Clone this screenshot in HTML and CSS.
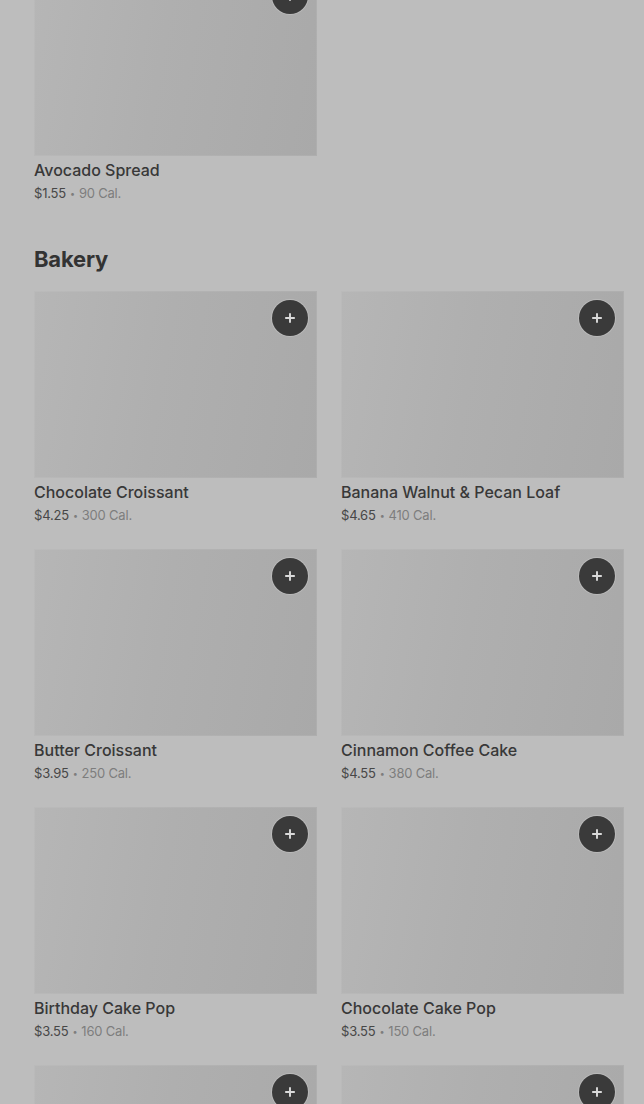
FILE: index.html
```html
<!DOCTYPE html>
<html lang="en">
<head>
    <meta charset="UTF-8">
    <meta name="viewport" content="width=device-width, initial-scale=1.0">
    <title>Menu</title>
    <link rel="stylesheet" href="styles.css">
</head>
<body>
    <main class="menu">
        <!-- Spreads (scrolled past) -->
        <section class="section section-top">
            <div class="grid">
                <div class="item">
                    <div class="thumb"><button class="add" type="button" aria-label="Add"><svg viewBox="0 0 16 16"><path d="M8 2.5v11M2.5 8h11"/></svg></button></div>
                    <div class="name">Avocado Spread</div>
                    <div class="meta"><span class="price">$1.55</span><span class="dot">•</span>90 Cal.</div>
                </div>
            </div>
        </section>

        <!-- Bakery -->
        <section class="section">
            <h2>Bakery</h2>
            <div class="grid">
                <div class="item">
                    <div class="thumb"><button class="add" type="button" aria-label="Add"><svg viewBox="0 0 16 16"><path d="M8 2.5v11M2.5 8h11"/></svg></button></div>
                    <div class="name">Chocolate Croissant</div>
                    <div class="meta"><span class="price">$4.25</span><span class="dot">•</span>300 Cal.</div>
                </div>
                <div class="item">
                    <div class="thumb"><button class="add" type="button" aria-label="Add"><svg viewBox="0 0 16 16"><path d="M8 2.5v11M2.5 8h11"/></svg></button></div>
                    <div class="name">Banana Walnut &amp; Pecan Loaf</div>
                    <div class="meta"><span class="price">$4.65</span><span class="dot">•</span>410 Cal.</div>
                </div>
                <div class="item">
                    <div class="thumb"><button class="add" type="button" aria-label="Add"><svg viewBox="0 0 16 16"><path d="M8 2.5v11M2.5 8h11"/></svg></button></div>
                    <div class="name">Butter Croissant</div>
                    <div class="meta"><span class="price">$3.95</span><span class="dot">•</span>250 Cal.</div>
                </div>
                <div class="item">
                    <div class="thumb"><button class="add" type="button" aria-label="Add"><svg viewBox="0 0 16 16"><path d="M8 2.5v11M2.5 8h11"/></svg></button></div>
                    <div class="name">Cinnamon Coffee Cake</div>
                    <div class="meta"><span class="price">$4.55</span><span class="dot">•</span>380 Cal.</div>
                </div>
                <div class="item">
                    <div class="thumb"><button class="add" type="button" aria-label="Add"><svg viewBox="0 0 16 16"><path d="M8 2.5v11M2.5 8h11"/></svg></button></div>
                    <div class="name">Birthday Cake Pop</div>
                    <div class="meta"><span class="price">$3.55</span><span class="dot">•</span>160 Cal.</div>
                </div>
                <div class="item">
                    <div class="thumb"><button class="add" type="button" aria-label="Add"><svg viewBox="0 0 16 16"><path d="M8 2.5v11M2.5 8h11"/></svg></button></div>
                    <div class="name">Chocolate Cake Pop</div>
                    <div class="meta"><span class="price">$3.55</span><span class="dot">•</span>150 Cal.</div>
                </div>
                <!-- next row, only the picture tops are in view -->
                <div class="item">
                    <div class="thumb"><button class="add" type="button" aria-label="Add"><svg viewBox="0 0 16 16"><path d="M8 2.5v11M2.5 8h11"/></svg></button></div>
                </div>
                <div class="item">
                    <div class="thumb"><button class="add" type="button" aria-label="Add"><svg viewBox="0 0 16 16"><path d="M8 2.5v11M2.5 8h11"/></svg></button></div>
                </div>
            </div>
        </section>
    </main>
</body>
</html>
```

FILE: styles.css
```css
html, body {
    height: 100%;
    overflow: hidden;
}

body {
    font-family: Inter, Roboto, "Liberation Sans", sans-serif;
    margin: 0;
    padding: 0;
    background-color: #bdbdbd;
    color: #3a3a3a;
}

.menu {
    padding: 0 20px 0 34px;
}

.section-top {
    margin-top: -31px;
}

.section h2 {
    font-size: 22px;
    line-height: 28px;
    font-weight: 700;
    color: #333;
    margin: 43px 0 18px;
    letter-spacing: -0.2px;
}

.grid {
    display: grid;
    grid-template-columns: 283px 283px;
    column-gap: 24px;
    row-gap: 25px;
}

.thumb {
    position: relative;
    height: 187px;
    background: linear-gradient(100deg, #b6b6b6 0%, #afafaf 45%, #a9a9a9 100%);
    box-shadow: inset 0 0 0 1px rgba(255, 255, 255, 0.06);
}

.add {
    position: absolute;
    top: 9px;
    right: 9px;
    width: 36px;
    height: 36px;
    border-radius: 50%;
    border: none;
    padding: 0;
    background-color: #3a3a3a;
    box-shadow: 0 0 0 1px rgba(255, 255, 255, 0.18);
    display: flex;
    align-items: center;
    justify-content: center;
    cursor: pointer;
}

.add svg {
    width: 14px;
    height: 14px;
    stroke: #d9d9d9;
    stroke-width: 2.2;
    fill: none;
}

.name {
    margin-top: 4px;
    font-size: 16px;
    line-height: 20px;
    font-weight: 500;
    color: #383838;
}

.meta {
    margin-top: 4px;
    height: 18px;
    font-size: 13px;
    line-height: 18px;
    color: #7d7d7d;
    letter-spacing: -0.2px;
}

.meta .price {
    color: #474747;
}

.meta .dot {
    display: inline-block;
    font-size: 9px;
    line-height: 0;
    margin: 0 4px;
    vertical-align: 1px;
}
```
